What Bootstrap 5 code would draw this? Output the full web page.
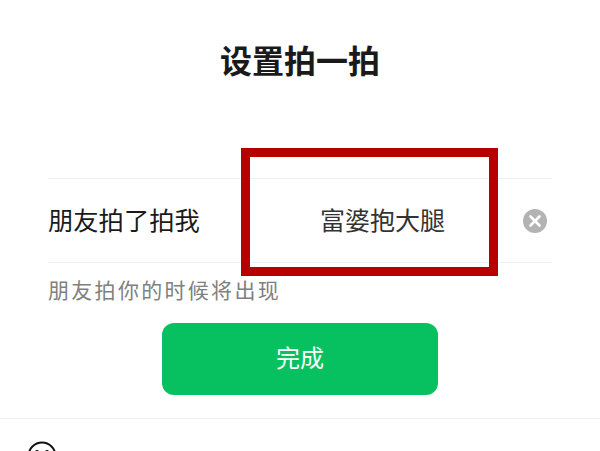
<!doctype html>
<html lang="zh"><head><meta charset="utf-8">
<link href="https://cdn.jsdelivr.net/npm/bootstrap@5.3.0/dist/css/bootstrap.min.css" rel="stylesheet">
<style>
html,body{height:451px;overflow:hidden;background:#fff}
body{font-family:"Liberation Sans","Noto Sans CJK SC",sans-serif;color:#1a1a1a}
.pat-page{position:relative;height:451px;overflow:hidden}
.pat-title{font-size:32px;font-weight:700;line-height:44px;padding-top:40px;height:178px;margin:0;color:#1a1a1a}
.pat-field{margin:0 48px;height:85px;border-top:1px solid #f0f0f0;border-bottom:1px solid #f0f0f0}
.pat-label{font-size:25.3px;width:272px;line-height:34px}
.pat-value{font-size:25px;line-height:34px;color:#333}
.pat-clear{width:24px;height:24px;margin-left:auto;margin-right:5px;flex:none}
.pat-hint{margin:14px 48px 0;font-size:21px;line-height:28px;color:#808080;letter-spacing:2.3px}
.pat-btn{width:276px;height:72px;margin-top:18px;border:0;border-radius:12px;background:#07c160;color:#fff;font-size:24px}
.pat-foot{margin-top:23px;border-top:1px solid #f0f0f0;padding:22px 0 0 27px}
.pat-mark{position:absolute;left:241px;top:148px;width:257px;height:128px;border:9px solid #b70000}
.pat-mark::after{content:"";position:absolute;left:248px;bottom:11px;width:14px;height:6px;background:#fff}
</style></head><body>
<div class="pat-page">
<h1 class="pat-title text-center">设置拍一拍</h1>
<div class="pat-field d-flex align-items-center">
<div class="pat-label">朋友拍了拍我</div>
<div class="pat-value">富婆抱大腿</div>
<svg class="pat-clear" viewBox="0 0 24 24"><circle cx="12" cy="12" r="12" fill="#b3b3b3"/><path d="M7.5 7.5l9 9M16.500 7.500l-9 9" stroke="#fff" stroke-width="2.600" stroke-linecap="round"/></svg>
</div>
<p class="pat-hint">朋友拍你的时候将出现</p>
<div class="d-flex justify-content-center"><button type="button" class="btn pat-btn">完成</button></div>
<div class="pat-foot"><svg width="30" height="30" viewBox="0 0 30 30" class="d-block"><circle cx="15" cy="15" r="13.500" fill="none" stroke="#111" stroke-width="2"/><circle cx="10" cy="11" r="2" fill="#111"/><circle cx="20" cy="11" r="2" fill="#111"/></svg></div>
<div class="pat-mark"></div>
</div>
</body></html>
